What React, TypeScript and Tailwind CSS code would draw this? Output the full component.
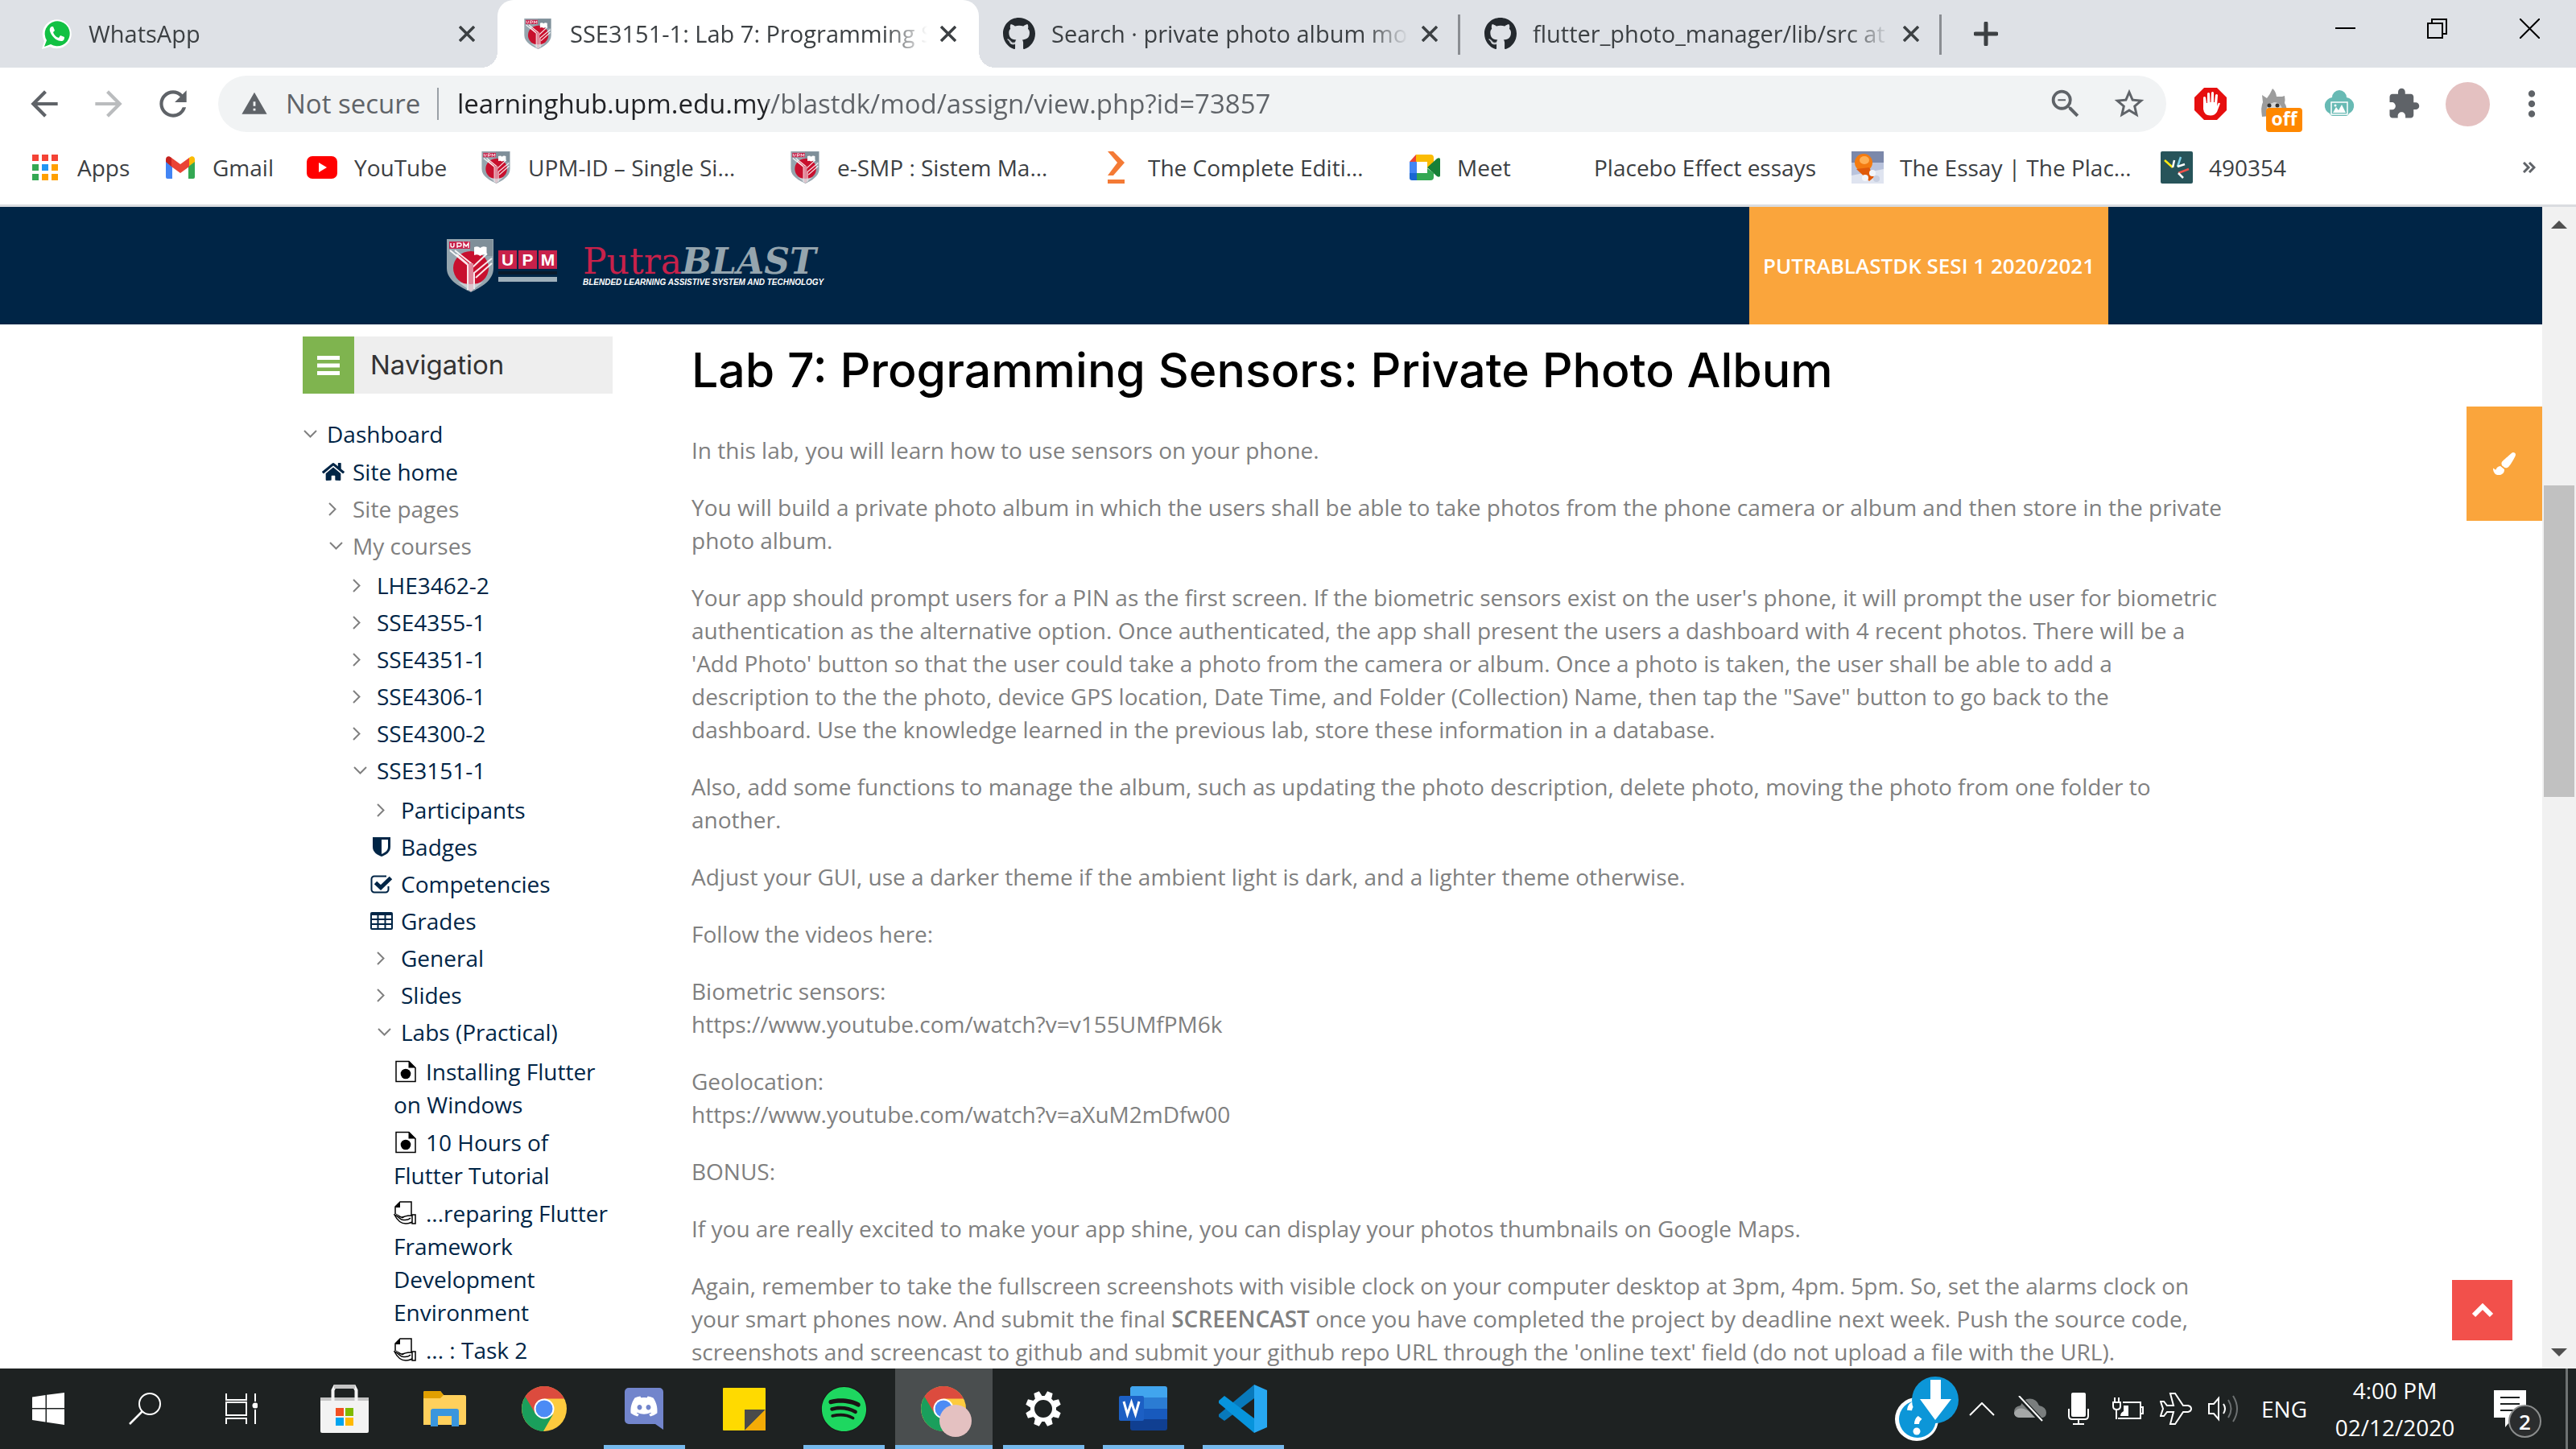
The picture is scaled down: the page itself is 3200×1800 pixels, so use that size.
import React from "react";
import { FaDiscord, FaGithub, FaHome, FaPaintBrush, FaSpotify } from "react-icons/fa";
import {
  MdArrowBack,
  MdArrowForward,
  MdExtension,
  MdMoreVert,
  MdRefresh,
  MdStarBorder,
  MdWarning,
  MdZoomOut,
} from "react-icons/md";

/* ---------- Brand marks ---------- */

function UpmShield({ className }: { className?: string }) {
  return (
    <svg viewBox="0 0 58 66" className={className} aria-hidden="true">
      <path d="M0 0h58v36c0 16-16 24-28 30C18 60 0 52 0 36z" fill="#95a5ae" />
      <path d="M29 1h28v20H29z" fill="#7f8f99" />
      <path d="M3 3h26v9H3z" fill="#c8214a" />
      <path d="M5 5v3q0 2 2 2t2-2V5M13 11V5h3q2 0 2 2t-2 2h-3M21 11V5l3 4 3-4v6" stroke="#fff" strokeWidth="1.4" fill="none" />
      <ellipse cx="30" cy="36" rx="22" ry="21" fill="#c8102e" />
      <path d="M4 14l22 18v30h4V30L10 14M12 19l14 12M56 24L34 42v20M50 18L31 36M56 30L36 48" stroke="#fff" strokeWidth="2" fill="none" opacity=".9" />
      <path d="M34 10q5-2 7.5 1 3-3 8-1v10q-5-2-8 1-3-3-7.500-1z" fill="#fff" />
      <path d="M27 30h6v32l-3 3-3-3z" fill="#e0879a" />
      <path d="M14 53q16 6 31 0l-15 12z" fill="#dce1e4" opacity=".7" />
    </svg>
  );
}

function WhatsAppMark() {
  return (
    <svg viewBox="0 0 40 40" className="size-10" aria-hidden="true">
      <path d="M2 39l3-10A18 18 0 1 1 12 36z" fill="#fff" />
      <path d="M5 36l3-8A15.500 15.500 0 1 1 13 33z" fill="#12c143" />
      <path d="M14 11c-3 2-3 5 0 10s8 8 12 8c3 0 4-2 4-5l-5-2-2 3c-4-1-6-4-7-7l2-2-2-5z" fill="#fff" />
    </svg>
  );
}

function GmailMark() {
  return (
    <svg viewBox="0 0 36 28" className="h-7 w-9" aria-hidden="true">
      <path d="M0 5v21a2 2 0 0 0 2 2h6V12z" fill="#4285f4" />
      <path d="M36 5v21a2 2 0 0 1-2 2h-6V12z" fill="#34a853" />
      <path d="M28 3v10l8-6V4c0-4-4-5-7-2z" fill="#fbbc04" />
      <path d="M0 4c0-4 4-5 7-2v11L0 7z" fill="#c5221f" />
      <path d="M7 2l11 8 11-8v11l-11 8-11-8z" fill="#ea4335" />
    </svg>
  );
}

function YouTubeMark() {
  return (
    <svg viewBox="0 0 38 28" className="h-7 w-[38px]" aria-hidden="true">
      <rect width="38" height="28" rx="7" fill="#f00" />
      <path d="M15 8l10 6-10 6z" fill="#fff" />
    </svg>
  );
}

function AppsMark() {
  const colors = ["#f44336", "#f44336", "#f44336", "#34a853", "#2196f3", "#ffa000", "#34a853", "#ffa000", "#ffa000"];
  return (
    <span className="grid grid-cols-3 gap-1">
      {colors.map((c, i) => (
        <span key={i} className="size-2" style={{ backgroundColor: c }} />
      ))}
    </span>
  );
}

function EditionMark() {
  return (
    <svg viewBox="0 0 40 40" className="size-10" aria-hidden="true">
      <path d="M10 0h7l14 14-14 16h-7l12-16z" fill="#f47a35" />
      <path d="M10 35h21v5H10z" fill="#f47a35" />
    </svg>
  );
}

function MeetMark() {
  return (
    <svg viewBox="0 0 38 32" className="h-8 w-[38px]" aria-hidden="true">
      <path d="M8 0v9H0z" fill="#ea4335" />
      <path d="M0 9h9v14H0z" fill="#4285f4" />
      <path d="M0 23h9v9H3a3 3 0 0 1-3-3z" fill="#1967d2" />
      <path d="M8 0h18a4 4 0 0 1 4 4v8l-8 5V9H8z" fill="#fbbc04" />
      <path d="M9 23h13v-6l8 6v5a4 4 0 0 1-4 4H9z" fill="#34a853" />
      <path d="M22 16l12-11c2-1 4-1 4 1v20c0 2-2 2-4 1z" fill="#188038" />
      <path d="M9 9h13v14H9z" fill="#fff" />
    </svg>
  );
}

function EssayMark() {
  return (
    <svg viewBox="0 0 40 40" className="size-10" aria-hidden="true">
      <rect width="40" height="40" fill="#b9c3dc" />
      <rect width="40" height="14" fill="#7b88aa" />
      <path d="M0 30l40-8v18H0z" fill="#dfe4f0" />
      <ellipse cx="15" cy="14" rx="11" ry="11" fill="#f47b10" />
      <ellipse cx="16" cy="11" rx="6" ry="5" fill="#ffb055" />
      <path d="M6 22l16-2 6 12-6 5z" fill="#e05a0a" />
      <circle cx="26" cy="27" r="4" fill="#f3f5fa" />
      <circle cx="17" cy="33" r="4" fill="#f3f5fa" />
      <circle cx="31" cy="34" r="4" fill="#c9cfe0" />
    </svg>
  );
}

function TealMark() {
  return (
    <svg viewBox="0 0 40 40" className="size-10" aria-hidden="true">
      <rect width="40" height="40" rx="2" fill="#27545a" />
      <g strokeWidth="2.5" fill="none">
        <path d="M5 11l10 9" stroke="#fde910" />
        <path d="M15 20l2-9" stroke="#fff" />
        <path d="M25 7l-4 12" stroke="#7fd0e8" />
        <path d="M21 19l9-3" stroke="#fff" />
        <path d="M22 27l13-5" stroke="#f0524b" />
        <path d="M22 27l6 6" stroke="#fff" />
      </g>
    </svg>
  );
}

function ChromeMark({ className }: { className?: string }) {
  return (
    <svg viewBox="0 0 56 56" className={className} aria-hidden="true">
      <circle cx="28" cy="28" r="28" fill="#fdcb3e" />
      <path d="M3.700 14A28 28 0 0 1 53 15.500H28L17 34z" fill="#dc4b3e" />
      <path d="M4.500 13A28 28 0 0 0 27 56l12-21-11 5-11-6z" fill="#1a9f5c" />
      <circle cx="28" cy="28" r="12.500" fill="#fff" />
      <circle cx="28" cy="28" r="10.500" fill="#4c8bf5" />
    </svg>
  );
}

function GitHubMark() {
  return <FaGithub className="size-[42px] text-[#24292e]" />;
}

/* ---------- Tab strip ---------- */

const tabs = [
  { title: "WhatsApp", icon: <WhatsAppMark />, active: false },
  { title: "SSE3151-1: Lab 7: Programming Sensors", icon: <UpmShield className="h-[38px] w-9" />, active: true },
  { title: "Search · private photo album mobile", icon: <GitHubMark />, active: false },
  { title: "flutter_photo_manager/lib/src at master", icon: <GitHubMark />, active: false },
];

function TabStrip() {
  return (
    <div className="flex h-[84px] shrink-0 items-stretch bg-[#dee1e6] pl-5 text-[#3c4043]">
      {tabs.map((tab, i) => (
        <div
          key={tab.title}
          className={
            tab.active
              ? "relative flex w-[598px] items-center rounded-t-[20px] bg-white pr-7 pl-[30px]"
              : "relative flex w-[598px] items-center pr-7 pl-[30px]"
          }
        >
          <button className="flex min-w-0 flex-1 items-center gap-5 text-left">
            <span className="flex w-10 shrink-0 justify-center">{tab.icon}</span>
            <span className="mr-4 flex-1 overflow-hidden text-[29px] leading-10 whitespace-nowrap [mask-image:linear-gradient(to_right,black_88%,transparent)]">
              {tab.title}
            </span>
          </button>
          <button aria-label={"Close " + tab.title} className="flex w-5 shrink-0 justify-center">
            <svg viewBox="0 0 20 20" className="size-5" aria-hidden="true">
              <path d="M1 1l18 18M19 1L1 19" stroke="currentColor" strokeWidth="3.5" />
            </svg>
          </button>
          {i > 1 && <span className="absolute top-[18px] right-0 h-[50px] w-[3px] bg-[#8a8d92]" />}
          {tab.active && (
            <>
              <span className="absolute bottom-0 -left-5 size-5 bg-[radial-gradient(circle_at_top_left,transparent_20px,white_20px)]" />
              <span className="absolute -right-5 bottom-0 size-5 bg-[radial-gradient(circle_at_top_right,transparent_20px,white_20px)]" />
            </>
          )}
        </div>
      ))}
      <button aria-label="New tab" className="ml-10 flex items-center">
        <svg viewBox="0 0 30 30" className="size-[30px]" aria-hidden="true">
          <path d="M15 2v26M2 15h26" stroke="#3c4043" strokeWidth="5" strokeLinecap="round" />
        </svg>
      </button>
      <div className="ml-auto flex h-[70px] items-center text-black">
        <button aria-label="Minimize" className="flex w-[114px] justify-center">
          <span className="h-[2px] w-[25px] bg-black" />
        </button>
        <button aria-label="Restore" className="flex w-[114px] justify-center">
          <svg viewBox="0 0 25 25" className="size-[25px]" aria-hidden="true">
            <path d="M1 6h18v18H1zM6 6V1h18v18h-5" fill="none" stroke="currentColor" strokeWidth="2" />
          </svg>
        </button>
        <button aria-label="Close window" className="flex w-[116px] justify-center">
          <svg viewBox="0 0 25 25" className="size-[25px]" aria-hidden="true">
            <path d="M0 0l25 25M25 0L0 25" stroke="currentColor" strokeWidth="2" />
          </svg>
        </button>
      </div>
    </div>
  );
}

/* ---------- Toolbar ---------- */

function Toolbar() {
  return (
    <div className="flex h-[90px] shrink-0 items-center px-[30px] text-[#5f6368]">
      <button aria-label="Back" className="flex w-[50px] justify-center">
        <MdArrowBack className="size-[50px]" />
      </button>
      <button aria-label="Forward" className="ml-[30px] flex w-[50px] justify-center text-[#babcbe]">
        <MdArrowForward className="size-[50px]" />
      </button>
      <button aria-label="Reload" className="ml-[30px] flex w-[50px] justify-center">
        <MdRefresh className="size-[50px]" />
      </button>
      <div className="ml-[31px] flex h-[70px] flex-1 items-center rounded-full bg-[#f1f3f4] pr-6 pl-7">
        <MdWarning className="size-[34px]" />
        <span className="ml-[22px] w-[168px] text-[33px] leading-10 whitespace-nowrap">Not secure</span>
        <span className="ml-5 h-10 w-[2px] bg-[#9aa0a6]" />
        <input
          aria-label="Address"
          readOnly
          value="learninghub.upm.edu.my/blastdk/mod/assign/view.php?id=73857"
          className="ml-[23px] h-12 flex-1 bg-transparent bg-[linear-gradient(to_right,#202124_385px,#5f6368_385px)] bg-clip-text text-[33px] text-transparent outline-none"
        />
        <button aria-label="Zoom" className="mr-[34px]">
          <MdZoomOut className="size-[46px]" />
        </button>
        <button aria-label="Bookmark this page">
          <MdStarBorder className="size-[44px]" />
        </button>
      </div>
      <div className="ml-[35px] flex items-center">
        <button aria-label="Ad blocker" className="flex w-10">
          <svg viewBox="0 0 40 40" className="size-10" aria-hidden="true">
            <path d="M12 0h16l12 12v16L28 40H12L0 28V12z" fill="#e60f0f" />
            <path
              d="M11 20l0-8q1.500-2 3 0l1 7h1l0-12q1.500-2 3 0l.5 11h1L21 6q1.500-2 3 0l0 12h1l1-9q1.500-2 3 0l-1 14 1-3q1.500-2 3-.5L28 30q-3 4.500-8 4.500-8 0-9-8z"
              fill="#fff"
            />
          </svg>
        </button>
        <button aria-label="Honey off" className="relative ml-10 flex w-10">
          <svg viewBox="0 0 40 40" className="size-10" aria-hidden="true">
            <path d="M4 36Q2 24 5 18L4 9l6 4Q14 8 17 1q4 3 5 10l7 0 3-1q1 5 0 9 4 6 2 14z" fill="#9c9c9c" />
            <path d="M9 32q0-12 10-14 10 0 11 14z" fill="#d6d6d6" />
            <circle cx="13" cy="22" r="2.5" fill="#333" />
            <circle cx="23" cy="22" r="2.5" fill="#333" />
          </svg>
          <span className="absolute top-[25px] left-[9px] flex h-[30px] w-[45px] items-center justify-center rounded bg-[#ff8800] pb-1 text-[23px] leading-none font-bold text-white">
            off
          </span>
        </button>
        <button aria-label="Cloud images" className="ml-10 flex w-10">
          <svg viewBox="0 0 40 34" className="h-[34px] w-10" aria-hidden="true">
            <path d="M11 9a9 9 0 0 1 18 0 10.500 10.500 0 0 1 3 20q-1 3-4 3H12q-3 0-4-3A10.500 10.500 0 0 1 11 9z" fill="#68bab4" />
            <rect x="10" y="15" width="20" height="15" fill="none" stroke="#fff" strokeWidth="1.5" />
            <path d="M12 28l4-7 3 4 4-7 5 10z" fill="#fff" />
            <circle cx="15" cy="19" r="1.5" fill="#fff" />
          </svg>
        </button>
        <button aria-label="Extensions" className="ml-[39px] flex w-[42px]">
          <MdExtension className="size-[42px]" />
        </button>
        <button aria-label="Profile" className="ml-[31px] size-[55px] rounded-full bg-[#e4c1c1]" />
        <button aria-label="Menu" className="ml-[27px] flex w-[50px] justify-center">
          <MdMoreVert className="size-[50px]" />
        </button>
      </div>
    </div>
  );
}

/* ---------- Bookmarks ---------- */

const bookmarks = [
  { label: "Apps", icon: <AppsMark />, width: "w-[168px]" },
  { label: "Gmail", icon: <GmailMark />, width: "w-[176px]" },
  { label: "YouTube", icon: <YouTubeMark />, width: "w-[216px]" },
  { label: "UPM-ID – Single Si…", icon: <UpmShield className="h-10 w-[38px]" />, width: "w-[384px]" },
  { label: "e-SMP : Sistem Ma…", icon: <UpmShield className="h-10 w-[38px]" />, width: "w-[386px]" },
  { label: "The Complete Editi…", icon: <EditionMark />, width: "w-[384px]" },
  { label: "Meet", icon: <MeetMark />, width: "w-[170px]" },
  { label: "Placebo Effect essays", icon: null, width: "w-[380px]" },
  { label: "The Essay | The Plac…", icon: <EssayMark />, width: "w-[384px]" },
  { label: "490354", icon: <TealMark />, width: "w-[200px]" },
];

function BookmarksBar() {
  return (
    <nav aria-label="Bookmarks" className="flex h-20 shrink-0 items-center pb-3 pl-9 text-[#3c4043]">
      {bookmarks.map((b) => (
        <a key={b.label} href="#" className={"flex shrink-0 items-center gap-5 " + b.width}>
          <span className="flex w-10 shrink-0 justify-center">{b.icon}</span>
          <span className="text-[28px] leading-10 whitespace-nowrap">{b.label}</span>
        </a>
      ))}
      <button aria-label="More bookmarks" className="mr-[50px] ml-auto">
        <svg viewBox="0 0 16 14" className="h-[14px] w-4" aria-hidden="true">
          <path d="M1 1l6 6-6 6M8 1l6 6-6 6" fill="none" stroke="#5f6368" strokeWidth="3" />
        </svg>
      </button>
    </nav>
  );
}

/* ---------- Site header ---------- */

function SiteHeader() {
  return (
    <header className="h-[146px] shrink-0 bg-[#002546]">
      <div className="mx-auto flex h-full max-w-[2080px] items-center justify-between pl-4">
        <a href="#" className="flex items-center">
          <UpmShield className="h-[66px] w-[58px]" />
          <span className="ml-[6px] flex w-[73px] flex-col gap-[3px]">
            <span className="flex gap-[2px] text-[21px] leading-[23px] font-bold text-white [font-family:'Liberation_Sans',sans-serif]">
              <span className="w-[23px] bg-[#c8214a] text-center">U</span>
              <span className="w-[23px] bg-[#c8214a] text-center">P</span>
              <span className="w-[23px] bg-[#c8214a] text-center">M</span>
            </span>
            <span className="h-1 bg-[#0a1a2c]" />
            <span className="h-[6px] bg-[#9fb0bb]" />
          </span>
          <span className="ml-8 flex flex-col">
            <span className="text-[44px] leading-[42px] [font-family:'DejaVu_Serif',serif]">
              <span className="text-[#c8214a]">Putra</span>
              <span className="font-bold text-[#95a5ae] italic">BLAST</span>
            </span>
            <span className="text-[10px] leading-[10px] font-bold whitespace-nowrap text-white italic [font-family:'Liberation_Sans',sans-serif]">
              BLENDED LEARNING ASSISTIVE SYSTEM AND TECHNOLOGY
            </span>
          </span>
        </a>
        <a
          href="#"
          className="flex h-full w-[446px] items-center justify-center bg-[#faa53c] text-[26px] font-semibold whitespace-nowrap text-white"
        >
          PUTRABLASTDK SESI 1 2020/2021
        </a>
      </div>
    </header>
  );
}

/* ---------- Navigation tree ---------- */

function ChevronRight() {
  return (
    <svg viewBox="0 0 10 17" className="ml-2 h-[17px] w-[10px]" aria-hidden="true">
      <path d="M1 1l7.500 7.500L1 16" fill="none" stroke="#808080" strokeWidth="2" />
    </svg>
  );
}

function ChevronDown() {
  return (
    <svg viewBox="0 0 17 10" className="ml-[9px] h-[10px] w-[17px]" aria-hidden="true">
      <path d="M1 1l7.500 7.500L16 1" fill="none" stroke="#808080" strokeWidth="2" />
    </svg>
  );
}

function BadgeIcon() {
  return (
    <svg viewBox="0 0 22 24" className="ml-[3px] h-6 w-[22px]" aria-hidden="true">
      <path d="M0 0h22v12c0 7-6 10-11 12C6 22 0 19 0 12z" fill="#002546" />
      <path d="M11 3h8v9c0 5-4 7-8 9z" fill="#fff" />
    </svg>
  );
}

function CompetencyIcon() {
  return (
    <svg viewBox="0 0 28 23" className="h-[23px] w-7" aria-hidden="true">
      <path d="M20 1.500H5A3.500 3.500 0 0 0 1.500 5v13A3.500 3.500 0 0 0 5 21.500h14a3.500 3.500 0 0 0 3.500-3.500v-4" fill="none" stroke="#002546" strokeWidth="2" />
      <path d="M6.500 9.500l6.500 6L25.500 3.500" fill="none" stroke="#002546" strokeWidth="5" />
    </svg>
  );
}

function GradesIcon() {
  return (
    <svg viewBox="0 0 28 22" className="h-[22px] w-7" aria-hidden="true">
      <rect width="28" height="22" rx="2" fill="#002546" />
      <path
        d="M2 4h6.500v4H2zM10.500 4h7v4h-7zM19.500 4H26v4h-6.500zM2 10h6.500v4H2zM10.500 10h7v4h-7zM19.500 10H26v4h-6.500zM2 16h6.500v4H2zM10.500 16h7v4h-7zM19.500 16H26v4h-6.500z"
        fill="#fff"
      />
    </svg>
  );
}

function FileIcon() {
  return (
    <svg viewBox="0 0 28 28" className="mr-3 inline-block size-7 align-[-3px]" aria-hidden="true">
      <path d="M3 1.500h16l8 8v17H3z" fill="#fff" stroke="#000" strokeWidth="1.5" />
      <path d="M18.500 1l9 8.500h-9z" fill="#000" />
      <circle cx="15" cy="17" r="6.3" fill="#000" />
    </svg>
  );
}

function AssignIcon() {
  return (
    <svg viewBox="0 0 28 29" className="mr-3 inline-block h-[29px] w-7 align-[-3px]" aria-hidden="true">
      <path d="M8 1h14v19L9 20l-7-4V7z" fill="#fff" stroke="#000" strokeWidth="1.5" />
      <path d="M8 1v7H2z" fill="#000" />
      <path d="M0 17c3 6 7 11 15 11 4 0 6-1 8-2v-8c-5 0-9 0-12 4-4-1-6-5-9-6z" fill="#fff" />
      <path d="M23 26c-2 1-4 2-8 2C8 28 4 23 1 17c4 1 6 5 9 6 4 1 8 1 11-2" fill="none" stroke="#000" strokeWidth="1.5" />
      <path d="M10 21c4-3 8-3 13-3" fill="none" stroke="#000" strokeWidth="1.5" />
      <path d="M23 17h4v11h-4z" fill="#fff" stroke="#000" strokeWidth="1.5" />
    </svg>
  );
}

function TreeItem({
  icon,
  label,
  muted,
  children,
}: {
  icon: React.ReactNode;
  label: string;
  muted?: boolean;
  children?: React.ReactNode;
}) {
  return (
    <li>
      <div className="flex h-[46px] items-center">
        <span className="flex w-[38px] shrink-0 items-center">{icon}</span>
        {muted ? (
          <span className="text-[#808080]">{label}</span>
        ) : (
          <a href="#" className="whitespace-nowrap">
            {label}
          </a>
        )}
      </div>
      {children}
    </li>
  );
}

const courses = ["LHE3462-2", "SSE4355-1", "SSE4351-1", "SSE4306-1", "SSE4300-2"];

function Sidebar() {
  return (
    <aside className="w-[385px] shrink-0">
      <div className="flex h-[71px] items-center bg-[#eeeeee]">
        <button aria-label="Toggle navigation" className="flex h-full w-16 items-center justify-center bg-[#7fb44f]">
          <svg viewBox="0 0 28 24" className="h-6 w-7" aria-hidden="true">
            <path d="M0 0h28v5H0zM0 9.500h28v5H0zM0 19h28v5H0z" fill="#fff" />
          </svg>
        </button>
        <h2 className="pl-5 text-[33px] text-[#333] [font-family:Inter,sans-serif]">Navigation</h2>
      </div>
      <ul className="mt-[27px] -ml-2 text-[28px] leading-[41px] text-[#002546]">
        <TreeItem icon={<ChevronDown />} label="Dashboard">
          <ul className="mt-px ml-8">
            <TreeItem icon={<FaHome className="size-7" />} label="Site home" />
            <TreeItem icon={<ChevronRight />} label="Site pages" muted />
            <TreeItem icon={<ChevronDown />} label="My courses" muted>
              <ul className="mt-[3px] ml-[30px]">
                {courses.map((c) => (
                  <TreeItem key={c} icon={<ChevronRight />} label={c} />
                ))}
                <TreeItem icon={<ChevronDown />} label="SSE3151-1">
                  <ul className="mt-[3px] ml-[30px]">
                    <TreeItem icon={<ChevronRight />} label="Participants" />
                    <TreeItem icon={<BadgeIcon />} label="Badges" />
                    <TreeItem icon={<CompetencyIcon />} label="Competencies" />
                    <TreeItem icon={<GradesIcon />} label="Grades" />
                    <TreeItem icon={<ChevronRight />} label="General" />
                    <TreeItem icon={<ChevronRight />} label="Slides" />
                    <TreeItem icon={<ChevronDown />} label="Labs (Practical)">
                      <ul className="mt-[6px] ml-[29px] flex flex-col gap-[6px]">
                        <li>
                          <a href="#">
                            <FileIcon />
                            Installing Flutter on Windows
                          </a>
                        </li>
                        <li>
                          <a href="#">
                            <FileIcon />
                            10 Hours of Flutter Tutorial
                          </a>
                        </li>
                        <li>
                          <a href="#">
                            <AssignIcon />
                            ...reparing Flutter Framework Development Environment
                          </a>
                        </li>
                        <li>
                          <a href="#">
                            <AssignIcon />
                            ... : Task 2
                          </a>
                        </li>
                      </ul>
                    </TreeItem>
                  </ul>
                </TreeItem>
              </ul>
            </TreeItem>
          </ul>
        </TreeItem>
      </ul>
    </aside>
  );
}

/* ---------- Assignment text ---------- */

function Assignment() {
  return (
    <main className="min-w-0 flex-1 pr-[14px]">
      <h1 className="text-[59px] leading-[84px] font-medium whitespace-nowrap text-black [font-family:Inter,sans-serif]">
        Lab 7: Programming Sensors: Private Photo Album
      </h1>
      <div className="mt-[37px] flex flex-col gap-[30px] text-[28px] leading-[41px] text-[#808080]">
        <p>In this lab, you will learn how to use sensors on your phone.</p>
        <p>
          You will build a private photo album in which the users shall be able to take photos from the phone camera or
          album and then store in the private photo album.
        </p>
        <p>
          Your app should prompt users for a PIN as the first screen. If the biometric sensors exist on the user's
          phone, it will prompt the user for biometric authentication as the alternative option. Once authenticated,
          the app shall present the users a dashboard with 4 recent photos. There will be a 'Add Photo' button so that
          the user could take a photo from the camera or album. Once a photo is taken, the user shall be able to add a
          description to the the photo, device GPS location, Date Time, and Folder (Collection) Name, then tap the
          "Save" button to go back to the dashboard. Use the knowledge learned in the previous lab, store these
          information in a database.
        </p>
        <p>
          Also, add some functions to manage the album, such as updating the photo description, delete photo, moving
          the photo from one folder to another.
        </p>
        <p>Adjust your GUI, use a darker theme if the ambient light is dark, and a lighter theme otherwise.</p>
        <p>Follow the videos here:</p>
        <p>
          Biometric sensors:
          <br />
          https://www.youtube.com/watch?v=v155UMfPM6k
        </p>
        <p>
          Geolocation:
          <br />
          https://www.youtube.com/watch?v=aXuM2mDfw00
        </p>
        <p>BONUS:</p>
        <p>If you are really excited to make your app shine, you can display your photos thumbnails on Google Maps.</p>
        <p>
          Again, remember to take the fullscreen screenshots with visible clock on your computer desktop at 3pm, 4pm.
          5pm. So, set the alarms clock on your smart phones now. And submit the final{" "}
          <strong className="font-semibold">SCREENCAST</strong> once you have completed the project by deadline next
          week. Push the source code, screenshots and screencast to github and submit your github repo URL through the
          'online text' field (do not upload a file with the URL).
        </p>
      </div>
    </main>
  );
}

function Scrollbar() {
  return (
    <div className="relative flex w-[42px] shrink-0 flex-col items-center justify-between bg-[#f1f1f1] pt-[17px] pb-[15px]">
      <svg viewBox="0 0 20 10" className="h-[10px] w-5" aria-hidden="true">
        <path d="M10 0l10 10H0z" fill="#505050" />
      </svg>
      <div className="absolute top-[346px] left-[2px] h-[387px] w-[38px] bg-[#c1c1c1]" />
      <svg viewBox="0 0 20 10" className="h-[10px] w-5" aria-hidden="true">
        <path d="M0 0h20L10 10z" fill="#505050" />
      </svg>
    </div>
  );
}

/* ---------- Taskbar ---------- */

function TaskButton({
  label,
  running,
  active,
  children,
}: {
  label: string;
  running?: boolean;
  active?: boolean;
  children: React.ReactNode;
}) {
  return (
    <div className="relative flex w-[124px] justify-center">
      <button
        aria-label={label}
        className={active ? "flex w-[121px] items-center justify-center bg-[#4a4e4f]" : "flex w-[121px] items-center justify-center"}
      >
        {children}
      </button>
      {active ? (
        <span className="absolute bottom-0 h-[5px] w-[121px] bg-[#76b9ed]" />
      ) : (
        running && <span className="absolute bottom-0 h-[5px] w-[101px] bg-[#76b9ed]" />
      )}
    </div>
  );
}

function StoreMark() {
  return (
    <svg viewBox="0 0 60 60" className="size-[60px]" aria-hidden="true">
      <path d="M0 16h60v6H0z" fill="#c4c4c4" />
      <path d="M0 20h60v38a2 2 0 0 1-2 2H2a2 2 0 0 1-2-2z" fill="#f3f3f3" />
      <path d="M15.500 20V7l2.500-5h24l2.500 5v13" fill="none" stroke="#f3f3f3" strokeWidth="4" />
      <path d="M17 0h26v5H17z" fill="#c4c4c4" />
      <path d="M19 29h10v10H19z" fill="#f25022" />
      <path d="M31 29h10v10H31z" fill="#7fba00" />
      <path d="M19 41h10v10H19z" fill="#00a4ef" />
      <path d="M31 41h10v10H31z" fill="#ffb900" />
    </svg>
  );
}

function ExplorerMark() {
  return (
    <svg viewBox="0 0 53 44" className="h-11 w-[53px]" aria-hidden="true">
      <path d="M0 2a2 2 0 0 1 2-2h19l4 5h26a2 2 0 0 1 2 2v33a2 2 0 0 1-2 2H0z" fill="#ffd05c" />
      <path d="M0 2a2 2 0 0 1 2-2h19l4 5-4 4H0z" fill="#e19f00" />
      <path d="M9 44V25a3 3 0 0 1 3-3h29a3 3 0 0 1 3 3v19h-9V31H18v13z" fill="#3a96dd" />
    </svg>
  );
}

function StickyMark() {
  return (
    <svg viewBox="0 0 53 53" className="size-[53px]" aria-hidden="true">
      <rect width="53" height="53" rx="1" fill="#ffda00" />
      <path d="M27 27h26L27 53z" fill="#4a4a4a" />
      <path d="M53 27v26H27z" fill="#f4ab06" />
    </svg>
  );
}

function DiscordMark() {
  return (
    <svg viewBox="0 0 48 52" className="h-[52px] w-12" aria-hidden="true">
      <path d="M5 0h38a5 5 0 0 1 5 5v47L38 45H5a5 5 0 0 1-5-5V5a5 5 0 0 1 5-5z" fill="#7285cc" />
      <FaDiscord x="6" y="5" size={36} className="fill-white" />
    </svg>
  );
}

function WordMark() {
  return (
    <svg viewBox="0 0 60 56" className="h-14 w-[60px]" aria-hidden="true">
      <path d="M16 0h41a3 3 0 0 1 3 3v11H14V2z" fill="#41a5ee" />
      <path d="M14 14h46v14H14z" fill="#2b7cd3" />
      <path d="M14 28h46v13H14z" fill="#185abd" />
      <path d="M14 41h46v11a3 3 0 0 1-3 3H17a3 3 0 0 1-3-3z" fill="#103f91" />
      <rect y="12" width="31" height="31" rx="2" fill="#1c5fc4" />
      <path d="M6 19l4.500 16L15.500 20l5 15L25 19" fill="none" stroke="#fff" strokeWidth="3" />
    </svg>
  );
}

function CodeMark() {
  return (
    <svg viewBox="0 0 60 60" className="size-[60px]" aria-hidden="true">
      <path d="M44 0v17L7 45l-7-5v-3z" fill="#0879bb" />
      <path d="M7 14l37 28v18L0 23v-3z" fill="#0794dc" />
      <path d="M44 0l16 7v46l-16 7z" fill="#27a8f2" />
    </svg>
  );
}

function GearMark() {
  return (
    <svg viewBox="0 0 44 44" className="size-11" aria-hidden="true">
      {[22.5, 67.5, 112.5, 157.5, 202.5, 247.5, 292.5, 337.5].map((a) => (
        <path key={a} d="M18.500 0h7l1.500 9H17z" fill="#fff" transform={`rotate(${a} 22 22)`} />
      ))}
      <circle cx="22" cy="22" r="13.5" fill="none" stroke="#fff" strokeWidth="5" />
    </svg>
  );
}

function Tray() {
  return (
    <div className="ml-auto flex items-center text-white">
      <button aria-label="Help download" className="flex w-20">
        <svg viewBox="0 0 80 80" className="size-20" aria-hidden="true">
          <circle cx="27" cy="53" r="27" fill="#fff" />
          <circle cx="28" cy="53" r="23" fill="#0c96d8" />
          <path d="M18 42q1-9 10-9 9 1 9 9 0 5-6 9-4 3-4 8" fill="none" stroke="#fff" strokeWidth="6" />
          <circle cx="27" cy="68" r="4.5" fill="#fff" />
          <circle cx="50" cy="29" r="29" fill="#0c96d8" />
          <path d="M44 4h13v24h13L50 54 31 28h13z" fill="#fff" />
        </svg>
      </button>
      <button aria-label="Show hidden icons" className="ml-3 flex w-8">
        <svg viewBox="0 0 32 17" className="h-[17px] w-8" aria-hidden="true">
          <path d="M1 16L16 1l15 15" fill="none" stroke="#fff" strokeWidth="2" />
        </svg>
      </button>
      <button aria-label="OneDrive offline" className="ml-6 flex w-10">
        <svg viewBox="0 0 40 32" className="h-8 w-10" aria-hidden="true">
          <path d="M8 12a12 12 0 0 1 23 0q9 2 9 9 0 6-6 6H6q-6-1-6-7 0-7 8-8z" fill="#7a7e7e" />
          <path d="M0 21q4-7 12-5l24 11H6q-6-1-6-6z" fill="#a5a8a8" />
          <path d="M5 0l30 32" stroke="#1d2222" strokeWidth="6" />
          <path d="M6 0l29 31" stroke="#fff" strokeWidth="2" />
        </svg>
      </button>
      <button aria-label="Microphone in use" className="ml-[27px] flex w-[26px]">
        <svg viewBox="0 0 26 40" className="h-10 w-[26px]" aria-hidden="true">
          <rect x="4" width="18" height="30" rx="2" fill="#fff" />
          <path d="M1 20v9q0 4 4 4h16q4 0 4-4v-9M13 33v6M6 39h14" fill="none" stroke="#fff" strokeWidth="2" />
        </svg>
      </button>
      <button aria-label="Battery charging" className="ml-7 flex w-10">
        <svg viewBox="0 0 40 28" className="h-7 w-10" aria-hidden="true">
          <path d="M14 6h22v20H8M36 12h3v8h-3M6 27V16M2 6h9v5q0 4-4.500 4T2 11zM4 0v6M9 0v6" fill="none" stroke="#fff" strokeWidth="2" />
          <path d="M21 10v13H11q0-4 4-6v-7z" fill="#fff" />
        </svg>
      </button>
      <button aria-label="Airplane mode" className="ml-5 flex w-10">
        <svg viewBox="0 0 40 40" className="size-10" aria-hidden="true">
          <path d="M13 1h6l10 15h6q4 1 4 4t-4 4h-6L19 39h-6l4-15h-8l-4 5H1l3-9-3-9h4l4 5h8z" fill="none" stroke="#fff" strokeWidth="2" />
        </svg>
      </button>
      <button aria-label="Volume" className="ml-5 flex w-10">
        <svg viewBox="0 0 40 36" className="h-9 w-10" aria-hidden="true">
          <path d="M1 12h6l6-7v26l-6-7H1z" fill="none" stroke="#fff" strokeWidth="2" />
          <path d="M19 12q4 6 0 12" fill="none" stroke="#fff" strokeWidth="2" />
          <path d="M25 7q7 11 0 22M31 2q10 16 0 32" fill="none" stroke="#6d7172" strokeWidth="2" />
        </svg>
      </button>
      <button className="ml-[26px] w-16 text-left text-[28px] leading-10">ENG</button>
      <button className="ml-5 w-[164px] text-center text-[28px] leading-[46px] whitespace-nowrap">
        <span className="block">4:00 PM</span>
        <span className="block">02/12/2020</span>
      </button>
      <button aria-label="Notifications" className="relative ml-[41px] flex w-10">
        <svg viewBox="0 0 40 46" className="h-[46px] w-10" aria-hidden="true">
          <path d="M0 0h40v34H24L14 46V34H0z" fill="#fff" />
          <path d="M8 9h24M8 17h24M8 25h16" stroke="#1d2222" strokeWidth="2" />
        </svg>
        <span className="absolute top-[18px] left-[18px] flex size-[41px] items-center justify-center rounded-full border-2 border-[#8b8d8d] bg-[#2b2d2e] text-[26px] leading-none font-semibold">
          2
        </span>
      </button>
      <span className="mr-[10px] ml-[49px] h-[100px] w-[3px] bg-[#6f7373]" />
    </div>
  );
}

function Taskbar() {
  return (
    <footer className="flex h-[100px] shrink-0 bg-[#1e2222]">
      <button aria-label="Start" className="flex w-[120px] items-center justify-center">
        <svg viewBox="0 0 40 40" className="size-10" aria-hidden="true">
          <path d="M0 5.500l16.500-2.500v16H0zM18 2.800L40 0v19H18zM0 20.500h16.500v16L0 34zM18 20.500h22V40l-22-3.200z" fill="#fff" />
        </svg>
      </button>
      <button aria-label="Search" className="flex w-[120px] items-center justify-center">
        <svg viewBox="0 0 40 40" className="size-10" aria-hidden="true">
          <circle cx="26" cy="14" r="13" fill="none" stroke="#fff" strokeWidth="2" />
          <path d="M17 23L1 39" stroke="#fff" strokeWidth="2.5" />
        </svg>
      </button>
      <button aria-label="Task view" className="mr-[6px] flex w-[120px] items-center justify-center">
        <svg viewBox="0 0 40 40" className="size-10" aria-hidden="true">
          <path d="M1 1v8h25V1M1 12h25v16H1zM1 39v-7h25v7M37 1v10M37 21v18" fill="none" stroke="#fff" strokeWidth="2" />
          <circle cx="37" cy="16" r="3.5" fill="#fff" />
        </svg>
      </button>
      <TaskButton label="Microsoft Store">
        <StoreMark />
      </TaskButton>
      <TaskButton label="File Explorer">
        <ExplorerMark />
      </TaskButton>
      <TaskButton label="Google Chrome">
        <ChromeMark className="size-14" />
      </TaskButton>
      <TaskButton label="Discord" running>
        <DiscordMark />
      </TaskButton>
      <TaskButton label="Sticky Notes">
        <StickyMark />
      </TaskButton>
      <TaskButton label="Spotify" running>
        <span className="flex rounded-full bg-[#191414]">
          <FaSpotify className="size-[57px] text-[#1ed760]" />
        </span>
      </TaskButton>
      <TaskButton label="Google Chrome profile" active>
        <span className="relative flex">
          <ChromeMark className="size-14" />
          <span className="absolute top-[23px] left-[23px] size-10 rounded-full bg-[#e4c1c1]" />
        </span>
      </TaskButton>
      <TaskButton label="Settings" running>
        <GearMark />
      </TaskButton>
      <TaskButton label="Word" running>
        <WordMark />
      </TaskButton>
      <TaskButton label="Visual Studio Code" running>
        <CodeMark />
      </TaskButton>
      <Tray />
    </footer>
  );
}

export default function App() {
  return (
    <div className="flex h-screen flex-col overflow-hidden bg-white [font-family:'Open_Sans','Noto_Sans',sans-serif]">
      <TabStrip />
      <Toolbar />
      <BookmarksBar />
      <div className="flex min-h-0 flex-1 border-t-[3px] border-[#dadce0]">
        <div className="relative flex min-w-0 flex-1 flex-col overflow-hidden">
          <SiteHeader />
          <div className="mx-auto mt-[15px] flex w-full max-w-[2406px] gap-[98px]">
            <Sidebar />
            <Assignment />
          </div>
          <button
            aria-label="Customize theme"
            className="absolute top-[248px] right-0 flex h-[142px] w-[94px] items-center justify-center bg-[#faa53c] text-white"
          >
            <FaPaintBrush className="size-7" />
          </button>
          <button
            aria-label="Back to top"
            className="absolute right-[37px] bottom-[35px] flex size-[75px] items-center justify-center bg-[#f2504b] text-white"
          >
            <svg viewBox="0 0 26 18" className="h-[18px] w-[26px]" aria-hidden="true">
              <path d="M2 15L13 4l11 11" fill="none" stroke="currentColor" strokeWidth="6" />
            </svg>
          </button>
        </div>
        <Scrollbar />
      </div>
      <Taskbar />
    </div>
  );
}
